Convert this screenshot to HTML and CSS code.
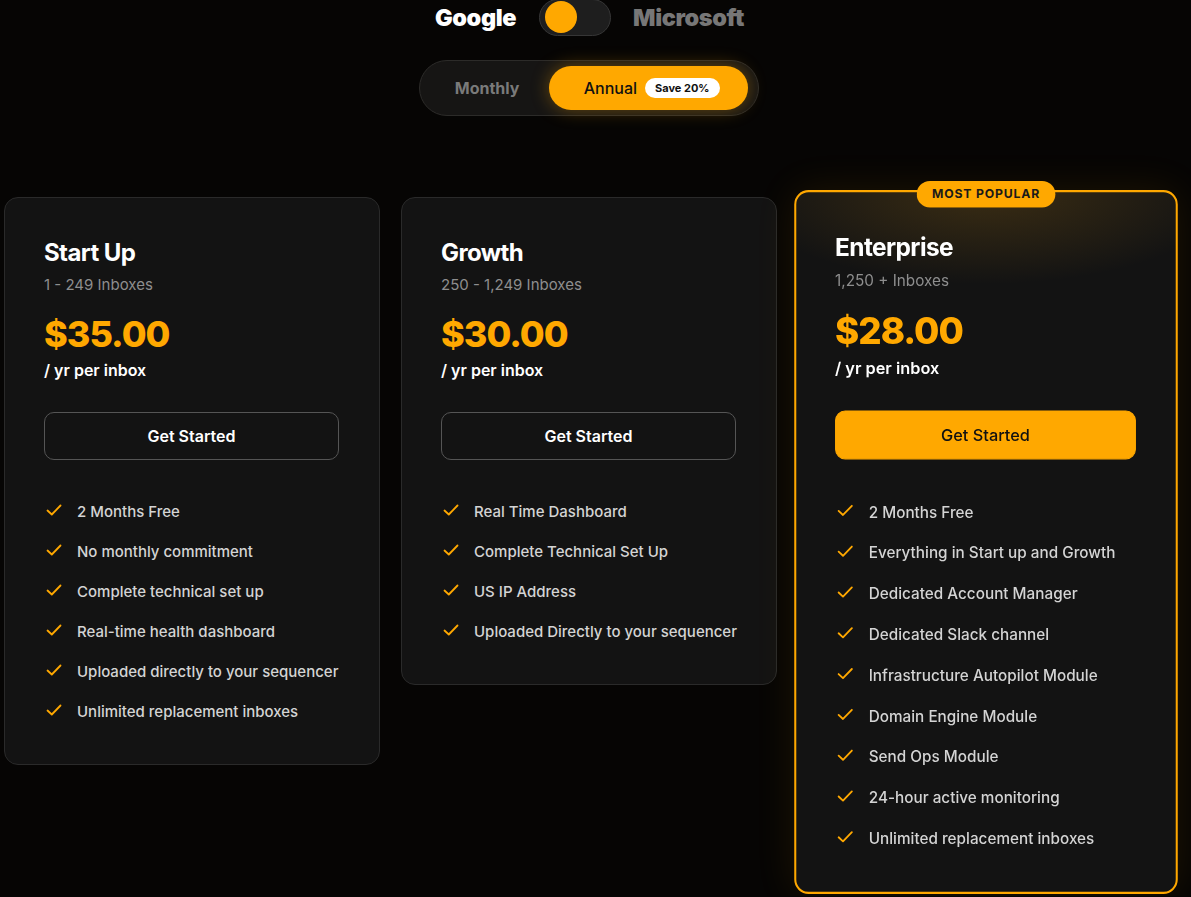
FILE: index.html
```html
<!DOCTYPE html>
<html lang="en">
<head>
<meta charset="utf-8">
<title>Pricing</title>
<link rel="stylesheet" href="styles.css">
</head>
<body>
<main class="page">
  <div class="provider">
    <span class="provider-label active">Google</span>
    <span class="switch"><span class="knob"></span></span>
    <span class="provider-label">Microsoft</span>
  </div>
  <div class="billing-wrap">
    <div class="billing">
      <span class="billing-opt">Monthly</span>
      <span class="billing-opt selected">Annual <span class="save">Save 20%</span></span>
    </div>
  </div>

  <section class="plans">
    <article class="card">
      <h2 class="plan-name">Start Up</h2>
      <p class="plan-range">1 - 249 Inboxes</p>
      <p class="price">$35.00</p>
      <p class="per">/ yr per inbox</p>
      <button class="cta">Get Started</button>
      <ul class="features">
        <li><svg class="check" viewBox="0 0 16 12"><path d="M1.5 6.5 L5.8 10.5 L14.5 1.5"/></svg>2 Months Free</li>
        <li><svg class="check" viewBox="0 0 16 12"><path d="M1.5 6.5 L5.8 10.5 L14.5 1.5"/></svg>No monthly commitment</li>
        <li><svg class="check" viewBox="0 0 16 12"><path d="M1.5 6.5 L5.8 10.5 L14.5 1.5"/></svg>Complete technical set up</li>
        <li><svg class="check" viewBox="0 0 16 12"><path d="M1.5 6.5 L5.8 10.5 L14.5 1.5"/></svg>Real-time health dashboard</li>
        <li><svg class="check" viewBox="0 0 16 12"><path d="M1.5 6.5 L5.8 10.5 L14.5 1.5"/></svg>Uploaded directly to your sequencer</li>
        <li><svg class="check" viewBox="0 0 16 12"><path d="M1.5 6.5 L5.8 10.5 L14.5 1.5"/></svg>Unlimited replacement inboxes</li>
      </ul>
    </article>

    <article class="card">
      <h2 class="plan-name">Growth</h2>
      <p class="plan-range">250 - 1,249 Inboxes</p>
      <p class="price">$30.00</p>
      <p class="per">/ yr per inbox</p>
      <button class="cta">Get Started</button>
      <ul class="features">
        <li><svg class="check" viewBox="0 0 16 12"><path d="M1.5 6.5 L5.8 10.5 L14.5 1.5"/></svg>Real Time Dashboard</li>
        <li><svg class="check" viewBox="0 0 16 12"><path d="M1.5 6.5 L5.8 10.5 L14.5 1.5"/></svg>Complete Technical Set Up</li>
        <li><svg class="check" viewBox="0 0 16 12"><path d="M1.5 6.5 L5.8 10.5 L14.5 1.5"/></svg>US IP Address</li>
        <li><svg class="check" viewBox="0 0 16 12"><path d="M1.5 6.5 L5.8 10.5 L14.5 1.5"/></svg>Uploaded Directly to your sequencer</li>
      </ul>
    </article>

    <article class="card popular">
      <span class="badge">MOST POPULAR</span>
      <h2 class="plan-name">Enterprise</h2>
      <p class="plan-range">1,250 + Inboxes</p>
      <p class="price">$28.00</p>
      <p class="per">/ yr per inbox</p>
      <button class="cta primary">Get Started</button>
      <ul class="features">
        <li><svg class="check" viewBox="0 0 16 12"><path d="M1.5 6.5 L5.8 10.5 L14.5 1.5"/></svg>2 Months Free</li>
        <li><svg class="check" viewBox="0 0 16 12"><path d="M1.5 6.5 L5.8 10.5 L14.5 1.5"/></svg>Everything in Start up and Growth</li>
        <li><svg class="check" viewBox="0 0 16 12"><path d="M1.5 6.5 L5.8 10.5 L14.5 1.5"/></svg>Dedicated Account Manager</li>
        <li><svg class="check" viewBox="0 0 16 12"><path d="M1.5 6.5 L5.8 10.5 L14.5 1.5"/></svg>Dedicated Slack channel</li>
        <li><svg class="check" viewBox="0 0 16 12"><path d="M1.5 6.5 L5.8 10.5 L14.5 1.5"/></svg>Infrastructure Autopilot Module</li>
        <li><svg class="check" viewBox="0 0 16 12"><path d="M1.5 6.5 L5.8 10.5 L14.5 1.5"/></svg>Domain Engine Module</li>
        <li><svg class="check" viewBox="0 0 16 12"><path d="M1.5 6.5 L5.8 10.5 L14.5 1.5"/></svg>Send Ops Module</li>
        <li><svg class="check" viewBox="0 0 16 12"><path d="M1.5 6.5 L5.8 10.5 L14.5 1.5"/></svg>24-hour active monitoring</li>
        <li><svg class="check" viewBox="0 0 16 12"><path d="M1.5 6.5 L5.8 10.5 L14.5 1.5"/></svg>Unlimited replacement inboxes</li>
      </ul>
    </article>
  </section>
</main>
</body>
</html>
```

FILE: styles.css
```css
* { box-sizing: border-box; }
html, body {
  margin: 0;
  padding: 0;
  background: #060504;
  font-family: Inter, "Noto Sans", sans-serif;
  color: #fff;
  overflow: hidden;
}
.page {
  width: 1170px;
  margin-left: 4px;
  height: 897px;
}
.provider {
  display: flex;
  justify-content: center;
  align-items: center;
  gap: 22px;
  height: 36px;
  margin-top: -1px;
  padding-left: 1px;
}
.provider-label {
  font-size: 23.5px;
  font-weight: 900;
  letter-spacing: -0.4px;
  color: #777;
}
.provider-label.active { color: #fff; margin-right: 1px; }
.switch {
  width: 72px;
  height: 37px;
  border-radius: 19px;
  background: #1e1e1e;
  border: 1px solid #363636;
  display: flex;
  align-items: center;
  padding-left: 5px;
}
.knob {
  width: 32px;
  height: 32px;
  border-radius: 50%;
  background: #ffa800;
}
.billing-wrap {
  display: flex;
  justify-content: center;
  margin-top: 25px;
}
.billing {
  display: flex;
  padding: 5px 10px 5px 5px;
  width: 340px;
  height: 56px;
  border-radius: 28px;
  background: #161514;
  border: 1px solid #2c2b29;
}
.billing-opt {
  display: flex;
  align-items: center;
  justify-content: center;
  font-size: 16px;
  font-weight: 700;
  color: #7a7a7a;
  width: 125px;
}
.billing-opt.selected {
  width: 200px;
  gap: 8px;
  color: #111;
  font-weight: 500;
  background: #ffa800;
  border-radius: 23px;
  padding-left: 6px;
  box-shadow: 0 0 18px rgba(255, 168, 0, 0.35);
}
.save {
  background: #fff;
  color: #111;
  font-size: 11px;
  font-weight: 700;
  border-radius: 10px;
  padding: 4px 10px;
  line-height: 12px;
}
.plans {
  display: grid;
  grid-template-columns: repeat(3, 376px);
  gap: 21px;
  align-items: start;
  margin-top: 81px;
}
.card {
  position: relative;
  background: #131313;
  border: 1px solid #2a2a2a;
  border-radius: 14px;
  padding: 40px 40px 40px 39px;
}
.card.popular {
  border: 2px solid #ffa800;
  padding: 40px 39px 40px 38px;
  transform: scale(1.02);
  background:
    radial-gradient(ellipse 240px 90px at 50% 0%, rgba(150, 105, 20, 0.30), rgba(150, 105, 20, 0) 100%),
    #131313;
  box-shadow: 0 0 40px rgba(255, 168, 0, 0.10);
}
.badge {
  position: absolute;
  top: -11px;
  left: 50%;
  transform: translateX(-50%);
  background: #ffa800;
  color: #1a1a1a;
  font-size: 12px;
  font-weight: 700;
  letter-spacing: 0.8px;
  padding: 6px 15px;
  border-radius: 14px;
  line-height: 14px;
  white-space: nowrap;
}
.plan-name {
  margin: 0;
  font-size: 24px;
  line-height: 30px;
  font-weight: 700;
  letter-spacing: -0.6px;
  color: #fff;
}
.plan-range {
  margin: 6px 0 0;
  font-size: 15px;
  line-height: 22px;
  color: #8e8e8e;
}
.price {
  margin: 16px 0 0;
  font-size: 36px;
  line-height: 44px;
  font-weight: 800;
  letter-spacing: -1px;
  color: #ffa800;
}
.per {
  margin: 3px 0 0;
  font-size: 16px;
  line-height: 22px;
  font-weight: 600;
  color: #fff;
}
.cta {
  display: block;
  width: 100%;
  height: 48px;
  margin-top: 31px;
  background: transparent;
  border: 1px solid #555;
  border-radius: 10px;
  color: #fff;
  font-family: inherit;
  font-size: 16px;
  font-weight: 600;
}
.cta.primary {
  background: #ffa800;
  border-color: #ffa800;
  color: #111;
  font-weight: 500;
}
.features {
  list-style: none;
  margin: 40px 0 0;
  padding: 0;
  display: flex;
  flex-direction: column;
  gap: 16px;
}
.features li {
  display: flex;
  align-items: center;
  font-size: 15px;
  line-height: 24px;
  font-weight: 500;
  color: #d4d4d4;
  white-space: nowrap;
}
.check {
  width: 16px;
  height: 12px;
  margin: 0 15px 4px 2px;
  flex: none;
  fill: none;
  stroke: #ffa800;
  stroke-width: 1.8;
  stroke-linecap: round;
  stroke-linejoin: round;
}
```
